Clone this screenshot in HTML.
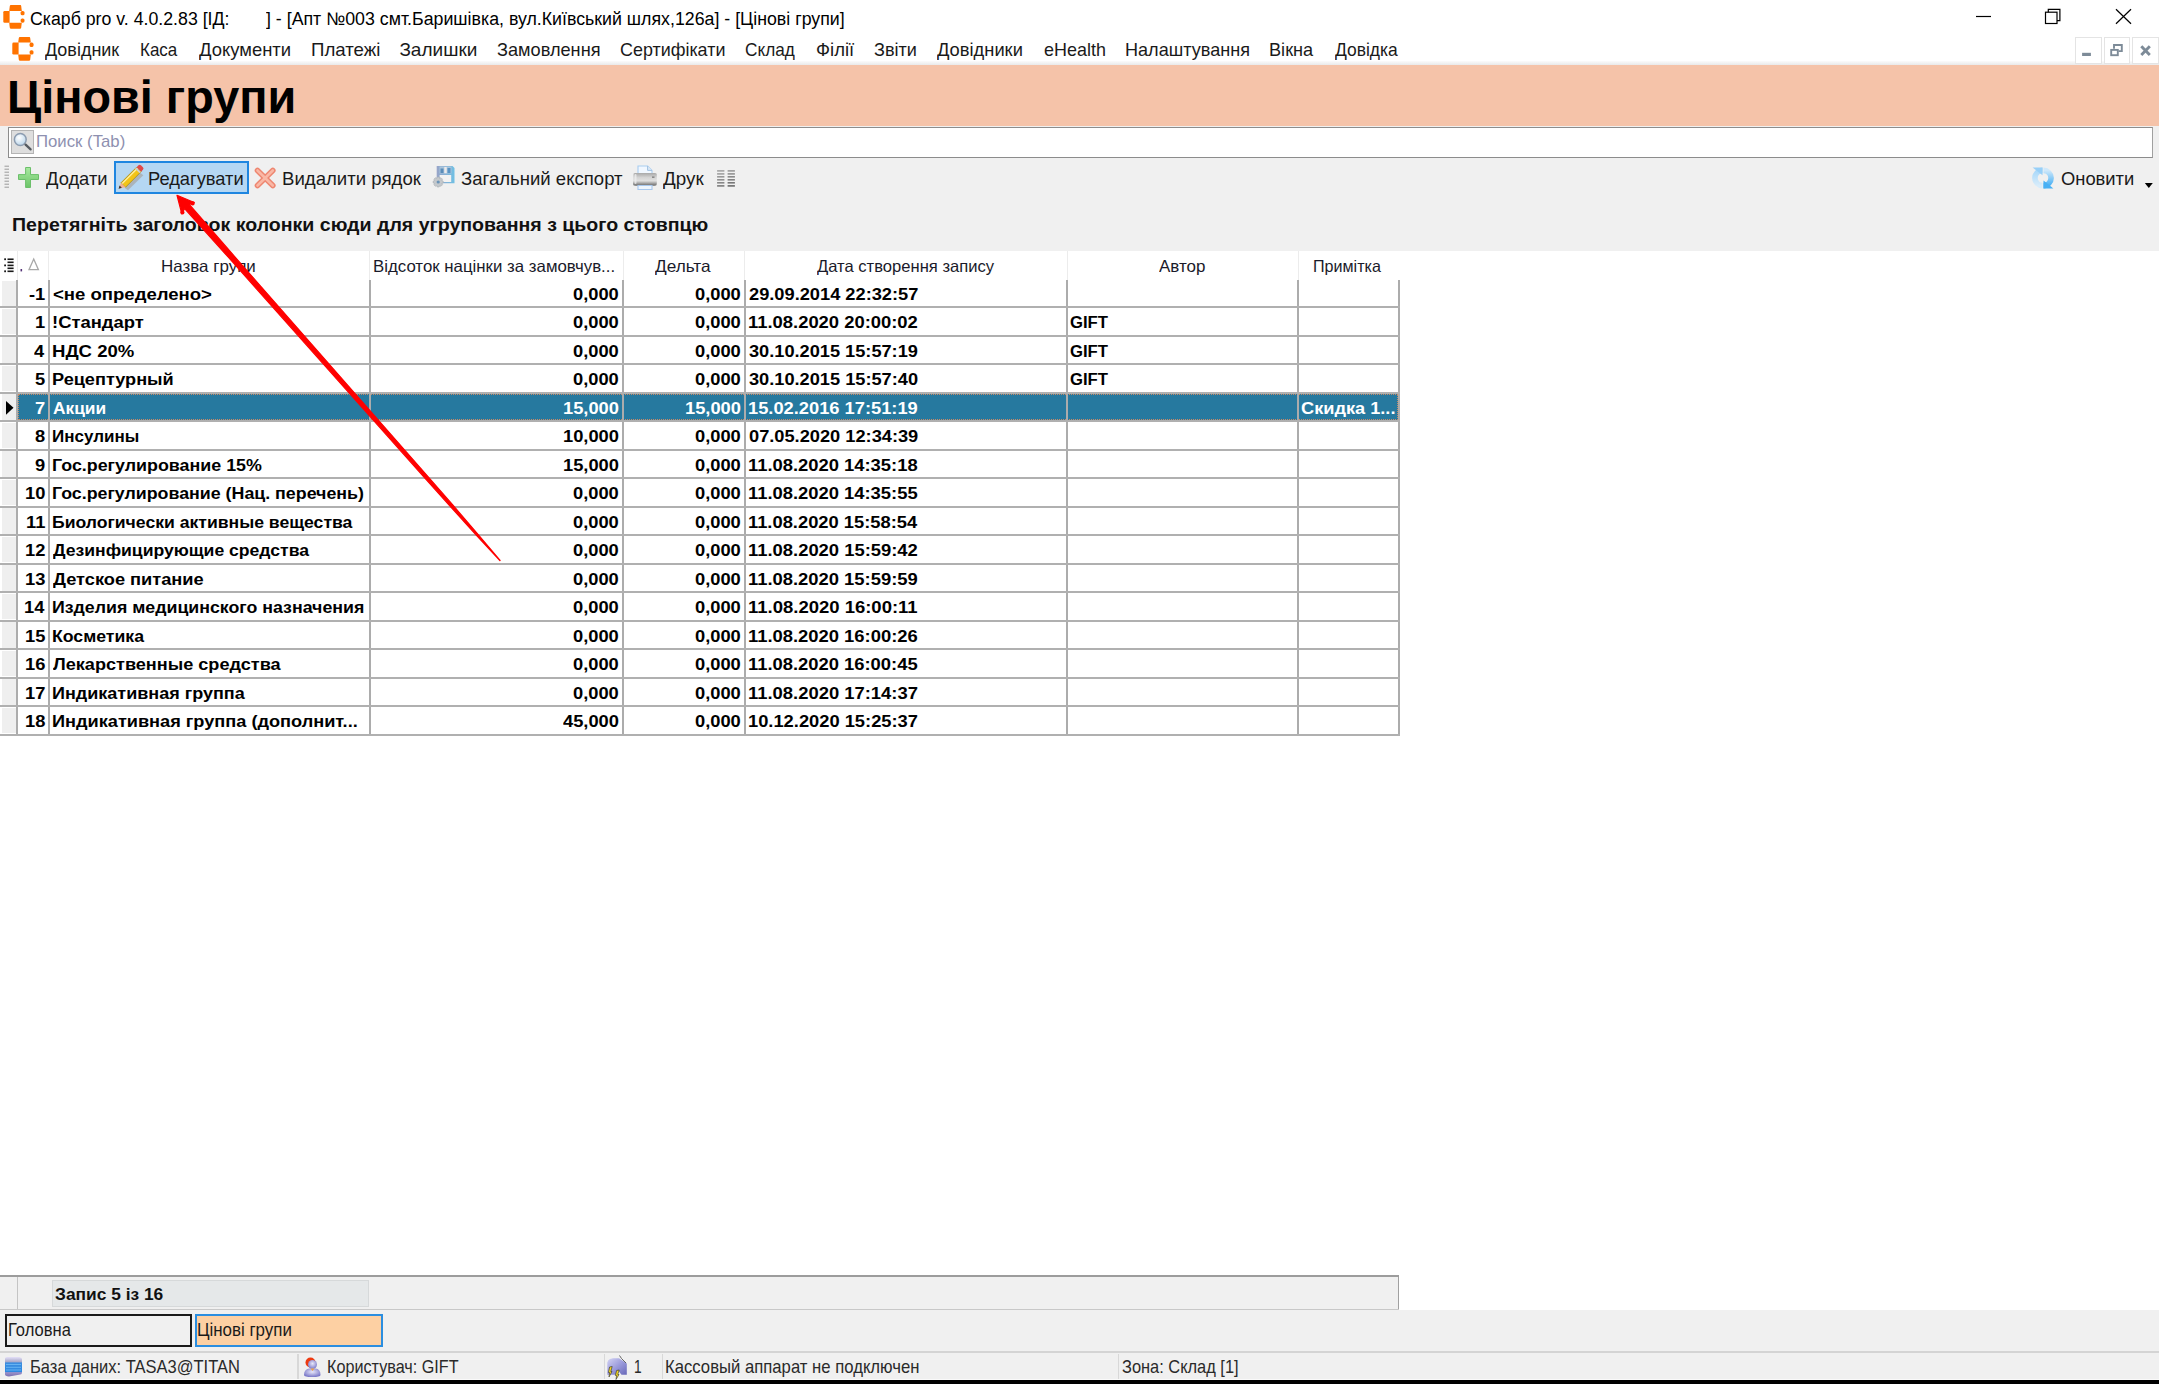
<!DOCTYPE html>
<html><head><meta charset="utf-8">
<style>
html,body{margin:0;padding:0;width:2159px;height:1384px;overflow:hidden;background:#fff;font-family:"Liberation Sans",sans-serif;}
body{position:relative;}
.t{position:absolute;white-space:pre;transform-origin:0 0;}
.b{position:absolute;}
svg{position:absolute;overflow:visible;}
</style></head><body>
<!-- menu bottom gradient -->
<div class="b" style="left:0;top:61px;width:2159px;height:4px;background:linear-gradient(#fbfbfb,#e9e9e9);"></div>
<!-- peach header -->
<div class="b" style="left:0;top:65px;width:2159px;height:61px;background:#f5c3a9;"></div>
<!-- gray panels -->
<div class="b" style="left:0;top:126px;width:2159px;height:124.5px;background:#f0f0f0;"></div>
<!-- search box -->
<div class="b" style="left:7.5px;top:126.5px;width:2143.5px;height:29px;background:#fff;border:1.5px solid #8c8c8c;border-right-color:#a0a0a0;"></div>
<div class="b" style="left:11px;top:130px;width:21px;height:22px;background:#dedede;border:1.5px solid #b4b4b4;"></div>
<svg style="left:11px;top:130px" width="24" height="24" viewBox="0 0 24 24">
  <defs><radialGradient id="lens" cx="0.4" cy="0.35" r="0.7"><stop offset="0" stop-color="#ffffff"/><stop offset="1" stop-color="#b8d4ea"/></radialGradient></defs>
  <circle cx="9.3" cy="9.5" r="5.9" fill="url(#lens)" stroke="#8c9cb0" stroke-width="1.5"/>
  <line x1="14.6" y1="14.6" x2="19.6" y2="19.4" stroke="#555a60" stroke-width="2.3" stroke-linecap="round"/>
</svg>

<!-- title bar logo -->
<svg style="left:0;top:0" width="40" height="34" viewBox="0 0 40 34">
  <g fill="#ff7300">
    <path d="M10 5 H20.5 Q21 5 21.2 6 L21.8 11 H9.2 L9.8 6 Q10 5 10.8 5 Z"/>
    <path d="M4.5 11 H9.6 V22.8 H4.5 Q3.3 22.8 3.3 21.5 V12.3 Q3.3 11 4.5 11 Z"/>
    <path d="M9.2 22.8 H21.8 L21.2 27.8 Q21 28.8 20 28.8 H11 Q10 28.8 9.8 27.8 Z"/>
    <rect x="20.6" y="11" width="3.9" height="4.3" rx="1.6"/>
    <rect x="20.6" y="18.4" width="3.9" height="4.3" rx="1.6"/>
  </g>
</svg>
<!-- menu logo -->
<svg style="left:8.7px;top:31.6px" width="40" height="34" viewBox="0 0 40 34">
  <g fill="#ff7300">
    <path d="M10 5 H20.5 Q21 5 21.2 6 L21.8 10.6 H9.2 L9.8 6 Q10 5 10.8 5 Z"/>
    <path d="M4.5 10.6 H9.6 V22.6 H4.5 Q3.3 22.6 3.3 21.3 V11.9 Q3.3 10.6 4.5 10.6 Z"/>
    <path d="M9.2 22.6 H21.8 L21.2 27.8 Q21 28.8 20 28.8 H11 Q10 28.8 9.8 27.8 Z"/>
    <rect x="20.6" y="10.6" width="3.9" height="4.4" rx="1.6"/>
    <rect x="20.6" y="18.2" width="3.9" height="4.4" rx="1.6"/>
  </g>
</svg>
<!-- window buttons -->
<svg style="left:1960px;top:0" width="199" height="34" viewBox="0 0 199 34">
  <line x1="16" y1="16.5" x2="31" y2="16.5" stroke="#000" stroke-width="1.2"/>
  <rect x="85.5" y="12.2" width="11.5" height="11.3" fill="none" stroke="#000" stroke-width="1.2"/>
  <path d="M88.3 12.2 V9.3 H99.9 V20.7 H97" fill="none" stroke="#000" stroke-width="1.2"/>
  <line x1="156" y1="9.2" x2="171" y2="23.8" stroke="#000" stroke-width="1.2"/>
  <line x1="171" y1="9.2" x2="156" y2="23.8" stroke="#000" stroke-width="1.2"/>
</svg>
<!-- mdi buttons -->
<div class="b" style="left:2075px;top:37px;width:24.5px;height:24.5px;border:1px solid #e4e4e4;background:#fff;"></div>
<div class="b" style="left:2103.5px;top:37px;width:24.5px;height:24.5px;border:1px solid #e4e4e4;background:#fff;"></div>
<div class="b" style="left:2132px;top:37px;width:24.5px;height:24.5px;border:1px solid #e4e4e4;background:#fff;"></div>
<svg style="left:2075px;top:37px" width="84" height="26" viewBox="0 0 84 26">
  <rect x="7.1" y="15.8" width="8.8" height="3.2" fill="#7d8b98"/>
  <g fill="none" stroke="#7d8b98" stroke-width="1.9">
    <rect x="36.2" y="12.9" width="6.6" height="5.3"/>
    <path d="M39 11.8 V8 H46.8 V14.1 H43.5"/>
  </g>
  <path d="M66.3 9.2 L74.8 17.9 M74.8 9.2 L66.3 17.9" stroke="#7d8b98" stroke-width="2.9"/>
</svg>

<!-- toolbar gripper -->
<svg style="left:4px;top:165px" width="6" height="24" viewBox="0 0 6 24">
  <g stroke="#9a9a9a" stroke-width="1" stroke-dasharray="0">
    <line x1="0.5" y1="1.2" x2="5" y2="1.2"/><line x1="0.5" y1="4.2" x2="5" y2="4.2"/>
    <line x1="0.5" y1="7.2" x2="5" y2="7.2"/><line x1="0.5" y1="10.2" x2="5" y2="10.2"/>
    <line x1="0.5" y1="13.2" x2="5" y2="13.2"/><line x1="0.5" y1="16.2" x2="5" y2="16.2"/>
    <line x1="0.5" y1="19.2" x2="5" y2="19.2"/><line x1="0.5" y1="22.2" x2="5" y2="22.2"/>
  </g>
</svg>
<!-- plus icon -->
<svg style="left:17px;top:166px" width="24" height="24" viewBox="0 0 24 24">
  <defs><linearGradient id="gp" x1="0" y1="0" x2="0" y2="1"><stop offset="0" stop-color="#a8eaa0"/><stop offset="1" stop-color="#6cc468"/></linearGradient></defs>
  <path d="M8.6 1.5 H13.5 V8.6 H21.5 V13.5 H13.5 V21.5 H8.6 V13.5 H1.5 V8.6 H8.6 Z" fill="url(#gp)" stroke="#6cbf6a" stroke-width="1"/>
</svg>
<!-- edit button -->
<div class="b" style="left:113.8px;top:161px;width:131.5px;height:28.8px;background:#b5d7f3;border:2px solid #1f86e0;"></div>
<svg style="left:115px;top:162px" width="32" height="32" viewBox="0 0 32 32"><g transform="translate(2.2 -0.6) scale(0.9)">
  <path d="M8.5 29.5 L25.5 12.5 L29 15.5 L12 32 Z" fill="#a8a8a8" opacity="0.75"/>
  <path d="M4.2 23.8 L21.6 6.4 L26.6 11.4 L9.2 28.8 Z" fill="#f2c418" stroke="#a88a10" stroke-width="0.9"/>
  <path d="M5.6 24.6 L22.6 7.6" stroke="#fff0a0" stroke-width="1.4"/>
  <path d="M21.6 6.4 L23.6 4.4 Q25 3 26.4 4.4 L28.6 6.6 Q30 8 28.6 9.4 L26.6 11.4 Z" fill="#e04848"/>
  <path d="M20.6 7.4 L25.6 12.4" stroke="#d0d0d0" stroke-width="2"/>
  <path d="M4.2 23.8 L9.2 28.8 L1.6 30.4 Z" fill="#f2b090"/>
  <path d="M1.6 30.4 L2.6 26.8 L5.2 29.4 Z" fill="#333"/>
</g></svg>
<!-- delete X icon -->
<svg style="left:254px;top:166.5px" width="23" height="22" viewBox="0 0 23 22">
  <path d="M3.5 3.5 L18.8 18.5 M18.8 3.5 L3.5 18.5" stroke="#ee8670" stroke-width="5.6" stroke-linecap="round"/>
  <path d="M3.5 3.5 L18.8 18.5 M18.8 3.5 L3.5 18.5" stroke="#f9b8a6" stroke-width="2.6" stroke-linecap="round"/>
</svg>
<!-- export floppy icon -->
<svg style="left:428px;top:162px" width="32" height="30" viewBox="0 0 32 30">
  <defs>
    <linearGradient id="fb" x1="0" y1="0" x2="1" y2="0"><stop offset="0" stop-color="#98a4c8"/><stop offset="1" stop-color="#70c0e4"/></linearGradient>
  </defs>
  <path d="M8.7 3.9 H24.5 L26.5 5.9 V21.3 H8.7 Z" fill="url(#fb)"/>
  <rect x="11.5" y="4.5" width="12" height="7" fill="#a8c4dc"/>
  <rect x="12.5" y="6.5" width="3" height="4.5" fill="#5a8cb8"/>
  <rect x="19.5" y="6" width="3" height="5" fill="#5a94c4"/>
  <rect x="16.3" y="5" width="2.4" height="6.2" fill="#eceaea"/>
  <rect x="11.6" y="13" width="11.6" height="7" fill="#f2f2f2"/>
  <g transform="translate(10.2 20)">
    <path d="M-1 -5 H1 L1.4 -3.6 L2.8 -4.3 L4.3 -2.8 L3.6 -1.4 L5 -1 V1 L3.6 1.4 L4.3 2.8 L2.8 4.3 L1.4 3.6 L1 5 H-1 L-1.4 3.6 L-2.8 4.3 L-4.3 2.8 L-3.6 1.4 L-5 1 V-1 L-3.6 -1.4 L-4.3 -2.8 L-2.8 -4.3 L-1.4 -3.6 Z" fill="#c4c8cc" stroke="#a8aeb4" stroke-width="0.6"/>
    <circle r="1.6" fill="#6a94b8"/>
  </g>
</svg>
<!-- printer icon -->
<svg style="left:628px;top:162px" width="32" height="30" viewBox="0 0 32 30">
  <defs>
    <linearGradient id="pb" x1="0" y1="0" x2="0" y2="1"><stop offset="0" stop-color="#a8a8a8"/><stop offset="0.35" stop-color="#d4d4d4"/><stop offset="0.6" stop-color="#e0e0e0"/><stop offset="0.9" stop-color="#808080"/><stop offset="1" stop-color="#9a9a9a"/></linearGradient>
  </defs>
  <path d="M10 4 H19.6 L24 8.4 V12 H10 Z" fill="#f0f7ff" stroke="#a8cdf0" stroke-width="1.1"/>
  <path d="M19.6 4 V8.4 H24" fill="#dbe8f6" stroke="#a0c0e0" stroke-width="1"/>
  <path d="M5.5 12.5 Q5 11 7 11 H27 Q29 11 28.8 12.5 V22 Q28.8 24 26.5 24 H7.5 Q5 24 5 22 Z" fill="url(#pb)"/>
  <rect x="6.5" y="12" width="2" height="10" rx="1" fill="#eeeeee" opacity="0.8"/>
  <rect x="24" y="14.5" width="2.5" height="1.3" fill="#7a7a7a"/>
  <path d="M10 23.5 H24 V27.5 H10 Z" fill="#eef5fd" stroke="#a8c8ee" stroke-width="1.1"/>
</svg>
<!-- column chooser icon -->
<svg style="left:716px;top:169px" width="20" height="19" viewBox="0 0 20 19"><rect x="1.1" y="1.1" width="7.3" height="1.6" fill="#a4a4a4"/><rect x="11.6" y="1.1" width="7.3" height="1.6" fill="#9a9a9a"/><rect x="1.1" y="4.1" width="7.3" height="1.6" fill="#a0a0a0"/><rect x="11.6" y="4.1" width="7.3" height="1.6" fill="#929292"/><rect x="1.1" y="7.0" width="7.3" height="1.6" fill="#989898"/><rect x="11.6" y="7.0" width="7.3" height="1.6" fill="#8a8a8a"/><rect x="1.1" y="10.0" width="7.3" height="1.6" fill="#909090"/><rect x="11.6" y="10.0" width="7.3" height="1.6" fill="#828282"/><rect x="1.1" y="13.0" width="7.3" height="1.6" fill="#888888"/><rect x="11.6" y="13.0" width="7.3" height="1.6" fill="#787878"/><rect x="1.1" y="16.1" width="7.3" height="1.6" fill="#7c7c7c"/><rect x="11.6" y="16.1" width="7.3" height="1.6" fill="#6c6c6c"/></svg>
<!-- refresh icon -->
<svg style="left:2031px;top:166px" width="25" height="24" viewBox="0 0 25 24">
  <defs>
    <linearGradient id="rfl" x1="0" y1="0" x2="0" y2="1"><stop offset="0" stop-color="#a8d8fa"/><stop offset="1" stop-color="#d8ecfa"/></linearGradient>
    <linearGradient id="rfr" x1="0" y1="0" x2="0" y2="1"><stop offset="0" stop-color="#cfe8fa"/><stop offset="1" stop-color="#48b0f4"/></linearGradient>
  </defs>
  <path d="M11.5 19.6 A7.6 7.6 0 0 1 11.5 4.4" fill="none" stroke="url(#rfl)" stroke-width="5.6"/>
  <path d="M1.6 1.4 H11.5 V9.2 Z" fill="#98d0f8"/>
  <path d="M11.5 4.4 A7.6 7.6 0 0 1 11.5 19.6" fill="none" stroke="url(#rfr)" stroke-width="5.6" transform="translate(1 0)"/>
  <path d="M22.4 22.4 H12.5 V14.6 Z" fill="#48b0f4"/>
</svg>
<!-- dropdown arrow -->
<svg style="left:2144px;top:182px" width="10" height="7" viewBox="0 0 10 7">
  <path d="M0.8 1 H8.8 L4.8 6 Z" fill="#000"/>
</svg>

<!-- ===== GRID ===== -->
<!-- row indicator column bg -->
<div class="b" style="left:1.7px;top:280.90px;width:14px;height:25.00px;background:#efefef;"></div>
<div class="b" style="left:1.7px;top:308.80px;width:14px;height:25.60px;background:#efefef;"></div>
<div class="b" style="left:1.7px;top:337.30px;width:14px;height:25.60px;background:#efefef;"></div>
<div class="b" style="left:1.7px;top:365.80px;width:14px;height:25.60px;background:#efefef;"></div>
<div class="b" style="left:1.7px;top:394.30px;width:14px;height:25.60px;background:#efefef;"></div>
<div class="b" style="left:1.7px;top:422.80px;width:14px;height:25.60px;background:#efefef;"></div>
<div class="b" style="left:1.7px;top:451.30px;width:14px;height:25.60px;background:#efefef;"></div>
<div class="b" style="left:1.7px;top:479.80px;width:14px;height:25.60px;background:#efefef;"></div>
<div class="b" style="left:1.7px;top:508.30px;width:14px;height:25.60px;background:#efefef;"></div>
<div class="b" style="left:1.7px;top:536.80px;width:14px;height:25.60px;background:#efefef;"></div>
<div class="b" style="left:1.7px;top:565.30px;width:14px;height:25.60px;background:#efefef;"></div>
<div class="b" style="left:1.7px;top:593.80px;width:14px;height:25.60px;background:#efefef;"></div>
<div class="b" style="left:1.7px;top:622.30px;width:14px;height:25.60px;background:#efefef;"></div>
<div class="b" style="left:1.7px;top:650.80px;width:14px;height:25.60px;background:#efefef;"></div>
<div class="b" style="left:1.7px;top:679.30px;width:14px;height:25.60px;background:#efefef;"></div>
<div class="b" style="left:1.7px;top:707.80px;width:14px;height:25.60px;background:#efefef;"></div>
<!-- selected row -->
<div class="b" style="left:17.5px;top:393.3px;width:1380.5px;height:27.5px;background:#26799f;"></div>
<div class="b" style="left:17.8px;top:394.4px;width:1378px;height:23.2px;border:1.4px dotted #c98a66;"></div>
<!-- header separators -->
<div class="b" style="left:16.7px;top:250.5px;width:1px;height:29.5px;background:#ececec;"></div>
<div class="b" style="left:48.2px;top:250.5px;width:1px;height:29.5px;background:#ececec;"></div>
<div class="b" style="left:369.3px;top:250.5px;width:1px;height:29.5px;background:#ececec;"></div>
<div class="b" style="left:622.6px;top:250.5px;width:1px;height:29.5px;background:#ececec;"></div>
<div class="b" style="left:744.3px;top:250.5px;width:1px;height:29.5px;background:#ececec;"></div>
<div class="b" style="left:1066.7px;top:250.5px;width:1px;height:29.5px;background:#ececec;"></div>
<div class="b" style="left:1297.6px;top:250.5px;width:1px;height:29.5px;background:#ececec;"></div>
<!-- header icons -->
<svg style="left:3px;top:257px" width="40" height="17" viewBox="0 0 40 17">
  <g fill="#1a1a1a">
    <rect x="1.2" y="1.35" width="1.8" height="1.8"/><rect x="1.2" y="7.5" width="1.8" height="1.8"/><rect x="1.2" y="13.4" width="1.8" height="1.8"/>
    <rect x="4.5" y="1.45" width="6.1" height="1.6"/><rect x="4.5" y="4.5" width="6.1" height="1.6"/><rect x="4.5" y="7.6" width="6.1" height="1.6"/>
    <rect x="4.5" y="10.5" width="6.1" height="1.6"/><rect x="4.5" y="13.5" width="6.1" height="1.6"/>
    <rect x="17.5" y="12" width="1.6" height="2.4" fill="#553377"/>
  </g>
  <path d="M30.7 2 L35.4 12.7 H26 Z" fill="none" stroke="#a8a8a8" stroke-width="1.3"/>
</svg>
<!-- grid lines: verticals in body -->
<div id="gridlines">
<div class="b" style="left:16.30px;top:279.5px;width:1.8px;height:456px;background:#acacac;"></div>
<div class="b" style="left:47.80px;top:279.5px;width:1.8px;height:456px;background:#acacac;"></div>
<div class="b" style="left:368.90px;top:279.5px;width:1.8px;height:456px;background:#acacac;"></div>
<div class="b" style="left:622.20px;top:279.5px;width:1.8px;height:456px;background:#acacac;"></div>
<div class="b" style="left:743.90px;top:279.5px;width:1.8px;height:456px;background:#acacac;"></div>
<div class="b" style="left:1066.30px;top:279.5px;width:1.8px;height:456px;background:#acacac;"></div>
<div class="b" style="left:1297.20px;top:279.5px;width:1.8px;height:456px;background:#acacac;"></div>
<div class="b" style="left:1397.80px;top:279.5px;width:1.8px;height:456px;background:#acacac;"></div>
<div class="b" style="left:0;top:306.25px;width:1399.6px;height:1.9px;background:#b0b0b0;"></div>
<div class="b" style="left:0;top:334.75px;width:1399.6px;height:1.9px;background:#b0b0b0;"></div>
<div class="b" style="left:0;top:363.25px;width:1399.6px;height:1.9px;background:#b0b0b0;"></div>
<div class="b" style="left:0;top:391.75px;width:1399.6px;height:1.9px;background:#b0b0b0;"></div>
<div class="b" style="left:0;top:420.25px;width:1399.6px;height:1.9px;background:#b0b0b0;"></div>
<div class="b" style="left:0;top:448.75px;width:1399.6px;height:1.9px;background:#b0b0b0;"></div>
<div class="b" style="left:0;top:477.25px;width:1399.6px;height:1.9px;background:#b0b0b0;"></div>
<div class="b" style="left:0;top:505.75px;width:1399.6px;height:1.9px;background:#b0b0b0;"></div>
<div class="b" style="left:0;top:534.25px;width:1399.6px;height:1.9px;background:#b0b0b0;"></div>
<div class="b" style="left:0;top:562.75px;width:1399.6px;height:1.9px;background:#b0b0b0;"></div>
<div class="b" style="left:0;top:591.25px;width:1399.6px;height:1.9px;background:#b0b0b0;"></div>
<div class="b" style="left:0;top:619.75px;width:1399.6px;height:1.9px;background:#b0b0b0;"></div>
<div class="b" style="left:0;top:648.25px;width:1399.6px;height:1.9px;background:#b0b0b0;"></div>
<div class="b" style="left:0;top:676.75px;width:1399.6px;height:1.9px;background:#b0b0b0;"></div>
<div class="b" style="left:0;top:705.25px;width:1399.6px;height:1.9px;background:#b0b0b0;"></div>
<div class="b" style="left:0;top:733.75px;width:1399.6px;height:1.9px;background:#b0b0b0;"></div>
</div>
<!-- row indicator triangle -->
<svg style="left:5px;top:400px" width="10" height="16" viewBox="0 0 10 16">
  <path d="M1 1 L8.5 7.8 L1 14.8 Z" fill="#000"/>
</svg>

<!-- ===== FOOTER ===== -->
<div class="b" style="left:0;top:1274.5px;width:1398.5px;height:35px;background:#f0f0f0;border-right:1px solid #a0a0a0;box-sizing:border-box;"></div>
<div class="b" style="left:0;top:1274.5px;width:1399px;height:2.5px;background:#9c9c9c;"></div>
<div class="b" style="left:0;top:1308.7px;width:1399px;height:1px;background:#c8c8c8;"></div>
<div class="b" style="left:16.5px;top:1277px;width:1px;height:31.7px;background:#c4c4c4;"></div>
<div class="b" style="left:51.5px;top:1279.5px;width:317px;height:27px;background:#e5e8e9;border:1px solid #d6d9da;box-sizing:border-box;"></div>
<!-- tabs bar -->
<div class="b" style="left:0;top:1309.7px;width:2159px;height:42px;background:#f0f0f0;"></div>
<div class="b" style="left:4.6px;top:1313.7px;width:187.2px;height:33.7px;border:2px solid #1a1a1a;box-sizing:border-box;background:#f0f0f0;"></div>
<div class="b" style="left:194.9px;top:1313.7px;width:187.7px;height:33.7px;border:2px solid #2b8ee0;box-sizing:border-box;background:#fdd0a3;"></div>
<!-- status bar -->
<div class="b" style="left:0;top:1351px;width:2159px;height:1.5px;background:#d4d4d4;"></div>
<div class="b" style="left:0;top:1352.5px;width:2159px;height:26.5px;background:#f0f0f0;"></div>
<div class="b" style="left:0;top:1379px;width:2159px;height:1px;background:#fafafa;"></div>
<div class="b" style="left:0;top:1379.9px;width:2159px;height:4.1px;background:#000;"></div>
<div class="b" style="left:297px;top:1354px;width:1.5px;height:25px;background:#d8d8d8;"></div>
<div class="b" style="left:603.5px;top:1354px;width:1.5px;height:25px;background:#d8d8d8;"></div>
<div class="b" style="left:661.5px;top:1354px;width:1.5px;height:25px;background:#d8d8d8;"></div>
<div class="b" style="left:1117.5px;top:1354px;width:1.5px;height:25px;background:#d8d8d8;"></div>
<!-- DB icon -->
<svg style="left:4px;top:1356px" width="20" height="22" viewBox="0 0 20 22">
  <defs><linearGradient id="db" x1="0" y1="0" x2="0" y2="1"><stop offset="0" stop-color="#e4e0f8"/><stop offset="0.25" stop-color="#a8a8c8"/><stop offset="0.3" stop-color="#3c8ee0"/><stop offset="0.75" stop-color="#2e88e0"/><stop offset="0.8" stop-color="#9a90c8"/><stop offset="1" stop-color="#7a70b0"/></linearGradient></defs>
  <path d="M1 2.5 Q1 1 3 1 H15 Q18 1.5 18 3 V17 Q18 18.5 15 18.8 L5 20.5 Q1 20 1 18.5 Z" fill="url(#db)"/>
  <g stroke="#6ab8f4" stroke-width="0.9"><line x1="2" y1="8.5" x2="17" y2="8.5"/><line x1="2" y1="11.3" x2="17" y2="11.3"/><line x1="2" y1="14" x2="17" y2="14"/></g>
</svg>
<!-- user icon -->
<svg style="left:303px;top:1356px" width="18" height="22" viewBox="0 0 18 22">
  <defs><radialGradient id="us" cx="0.5" cy="0.4" r="0.6"><stop offset="0" stop-color="#e8e8fa"/><stop offset="1" stop-color="#7a78c8"/></radialGradient></defs>
  <circle cx="7.5" cy="6.5" r="5" fill="#ee3a10"/>
  <circle cx="9.5" cy="8.5" r="4.5" fill="url(#us)"/>
  <path d="M1 19 Q1 13 6.5 12.5 H12.5 Q17.5 13 17.5 19 Q17.5 21 9 21 Q1 21 1 19 Z" fill="url(#us)"/>
  <path d="M7.5 12.5 L9.5 15 L11.5 12.5 Z" fill="#f0a040"/>
</svg>
<!-- cash register icon -->
<svg style="left:606px;top:1354px" width="24" height="26" viewBox="0 0 24 26">
  <defs><linearGradient id="cr" x1="0" y1="0" x2="1" y2="1"><stop offset="0" stop-color="#d4d4f4"/><stop offset="0.5" stop-color="#9c9cdc"/><stop offset="1" stop-color="#6868b8"/></linearGradient></defs>
  <path d="M1.3 8.5 Q2 5.5 4 5 L7 4.2 H13 L20.8 9.5 V20.8 H15.5 L12.5 17 L10 20.8 H1.3 Z" fill="url(#cr)"/>
  <path d="M3.6 13 L6.2 12.5 L4.8 17.5 L6 17.5 L3 23 L3.6 18.5 L2.4 18.5 Z" fill="#f4d820" stroke="#2a2a2a" stroke-width="0.6"/>
  <path d="M10.6 16.5 L13.2 16 L11.8 20.5 L13 20.5 L10 25.5 L10.6 21.5 L9.4 21.5 Z" fill="#f4d820" stroke="#2a2a2a" stroke-width="0.6"/>
  <path d="M13.5 1.5 L15.5 4.5 L20 9" stroke="#444" stroke-width="0.8" fill="none"/>
</svg>

<div class="t" style="left:30.11px;top:9.76px;font-size:18px;line-height:18px;font-weight:normal;color:#000;transform:scaleX(0.9848);">Скарб pro v. 4.0.2.83 [ІД:</div>
<div class="t" style="left:265.70px;top:9.76px;font-size:18px;line-height:18px;font-weight:normal;color:#000;transform:scaleX(0.9868);">] - [Апт №003 смт.Баришівка, вул.Київський шлях,126а] - [Цінові групи]</div>
<div class="t" style="left:44.91px;top:39.52px;font-size:19px;line-height:19px;font-weight:normal;color:#1a1a1a;transform:scaleX(0.9458);">Довідник</div>
<div class="t" style="left:140.36px;top:39.52px;font-size:19px;line-height:19px;font-weight:normal;color:#1a1a1a;transform:scaleX(0.8947);">Каса</div>
<div class="t" style="left:199.20px;top:39.52px;font-size:19px;line-height:19px;font-weight:normal;color:#1a1a1a;transform:scaleX(0.9702);">Документи</div>
<div class="t" style="left:310.83px;top:39.52px;font-size:19px;line-height:19px;font-weight:normal;color:#1a1a1a;transform:scaleX(0.9817);">Платежі</div>
<div class="t" style="left:399.40px;top:39.52px;font-size:19px;line-height:19px;font-weight:normal;color:#1a1a1a;transform:scaleX(1.0000);">Залишки</div>
<div class="t" style="left:496.73px;top:39.52px;font-size:19px;line-height:19px;font-weight:normal;color:#1a1a1a;transform:scaleX(0.9561);">Замовлення</div>
<div class="t" style="left:619.85px;top:39.52px;font-size:19px;line-height:19px;font-weight:normal;color:#1a1a1a;transform:scaleX(0.9426);">Сертифікати</div>
<div class="t" style="left:745.49px;top:39.52px;font-size:19px;line-height:19px;font-weight:normal;color:#1a1a1a;transform:scaleX(0.9052);">Склад</div>
<div class="t" style="left:815.53px;top:39.52px;font-size:19px;line-height:19px;font-weight:normal;color:#1a1a1a;transform:scaleX(0.9718);">Філії</div>
<div class="t" style="left:874.23px;top:39.52px;font-size:19px;line-height:19px;font-weight:normal;color:#1a1a1a;transform:scaleX(0.9515);">Звіти</div>
<div class="t" style="left:937.40px;top:39.52px;font-size:19px;line-height:19px;font-weight:normal;color:#1a1a1a;transform:scaleX(0.9639);">Довідники</div>
<div class="t" style="left:1043.64px;top:39.52px;font-size:19px;line-height:19px;font-weight:normal;color:#1a1a1a;transform:scaleX(0.9446);">eHealth</div>
<div class="t" style="left:1125.27px;top:39.52px;font-size:19px;line-height:19px;font-weight:normal;color:#1a1a1a;transform:scaleX(0.9515);">Налаштування</div>
<div class="t" style="left:1269.17px;top:39.52px;font-size:19px;line-height:19px;font-weight:normal;color:#1a1a1a;transform:scaleX(0.9554);">Вікна</div>
<div class="t" style="left:1334.61px;top:39.52px;font-size:19px;line-height:19px;font-weight:normal;color:#1a1a1a;transform:scaleX(0.9183);">Довідка</div>
<div class="t" style="left:6.68px;top:73.66px;font-size:46px;line-height:46px;font-weight:bold;color:#000;transform:scaleX(1.0169);">Цінові групи</div>
<div class="t" style="left:36.12px;top:132.91px;font-size:17px;line-height:17px;font-weight:normal;color:#8e90b0;transform:scaleX(0.9853);">Поиск (Tab)</div>
<div class="t" style="left:46.30px;top:168.62px;font-size:19px;line-height:19px;font-weight:normal;color:#1a1a1a;transform:scaleX(0.9652);">Додати</div>
<div class="t" style="left:147.56px;top:168.62px;font-size:19px;line-height:19px;font-weight:normal;color:#1a1a1a;transform:scaleX(0.9627);">Редагувати</div>
<div class="t" style="left:281.93px;top:168.62px;font-size:19px;line-height:19px;font-weight:normal;color:#1a1a1a;transform:scaleX(0.9792);">Видалити рядок</div>
<div class="t" style="left:460.71px;top:168.62px;font-size:19px;line-height:19px;font-weight:normal;color:#1a1a1a;transform:scaleX(0.9769);">Загальний експорт</div>
<div class="t" style="left:662.80px;top:168.62px;font-size:19px;line-height:19px;font-weight:normal;color:#1a1a1a;transform:scaleX(0.9898);">Друк</div>
<div class="t" style="left:2061.03px;top:168.62px;font-size:19px;line-height:19px;font-weight:normal;color:#1a1a1a;transform:scaleX(0.9654);">Оновити</div>
<div class="t" style="left:11.50px;top:215.86px;font-size:18px;line-height:18px;font-weight:bold;color:#111;transform:scaleX(1.0865);">Перетягніть заголовок колонки сюди для угруповання з цього стовпцю</div>
<div class="t" style="left:161.36px;top:258.23px;font-size:16.5px;line-height:16.5px;font-weight:normal;color:#1a1a2a;transform:scaleX(1.0278);">Назва групи</div>
<div class="t" style="left:373.07px;top:258.23px;font-size:16.5px;line-height:16.5px;font-weight:normal;color:#1a1a2a;transform:scaleX(1.0199);">Відсоток націнки за замовчув...</div>
<div class="t" style="left:655.40px;top:258.23px;font-size:16.5px;line-height:16.5px;font-weight:normal;color:#1a1a2a;transform:scaleX(1.0430);">Дельта</div>
<div class="t" style="left:817.20px;top:258.23px;font-size:16.5px;line-height:16.5px;font-weight:normal;color:#1a1a2a;transform:scaleX(1.0050);">Дата створення запису</div>
<div class="t" style="left:1159.30px;top:258.23px;font-size:16.5px;line-height:16.5px;font-weight:normal;color:#1a1a2a;transform:scaleX(1.0280);">Автор</div>
<div class="t" style="left:1313.03px;top:258.23px;font-size:16.5px;line-height:16.5px;font-weight:normal;color:#1a1a2a;transform:scaleX(0.9766);">Примітка</div>
<div class="t" style="left:55.29px;top:1286.21px;font-size:17px;line-height:17px;font-weight:bold;color:#111;transform:scaleX(1.0216);">Запис 5 із 16</div>
<div class="t" style="left:7.98px;top:1322.19px;font-size:17.5px;line-height:17.5px;font-weight:normal;color:#1a1a1a;transform:scaleX(0.9454);">Головна</div>
<div class="t" style="left:197.25px;top:1322.19px;font-size:17.5px;line-height:17.5px;font-weight:normal;color:#1a1a1a;transform:scaleX(0.9663);">Цінові групи</div>
<div class="t" style="left:29.90px;top:1357.22px;font-size:19px;line-height:19px;font-weight:normal;color:#2a2a2a;transform:scaleX(0.8684);">База даних: TASA3@TITAN</div>
<div class="t" style="left:327.02px;top:1357.22px;font-size:19px;line-height:19px;font-weight:normal;color:#2a2a2a;transform:scaleX(0.8520);">Користувач: GIFT</div>
<div class="t" style="left:633.99px;top:1357.22px;font-size:19px;line-height:19px;font-weight:normal;color:#2a2a2a;transform:scaleX(0.7229);">1</div>
<div class="t" style="left:664.68px;top:1357.22px;font-size:19px;line-height:19px;font-weight:normal;color:#2a2a2a;transform:scaleX(0.8782);">Кассовый аппарат не подключен</div>
<div class="t" style="left:1122.48px;top:1357.22px;font-size:19px;line-height:19px;font-weight:normal;color:#2a2a2a;transform:scaleX(0.8635);">Зона: Склад [1]</div>
<div class="t" style="left:28.59px;top:286.56px;font-size:16px;line-height:16px;font-weight:bold;color:#000;transform:scaleX(1.1431);">-1</div>
<div class="t" style="left:52.60px;top:286.56px;font-size:16px;line-height:16px;font-weight:bold;color:#000;transform:scaleX(1.1589);">&lt;не определено&gt;</div>
<div class="t" style="left:573.31px;top:286.56px;font-size:16px;line-height:16px;font-weight:bold;color:#000;transform:scaleX(1.1431);">0,000</div>
<div class="t" style="left:694.71px;top:286.56px;font-size:16px;line-height:16px;font-weight:bold;color:#000;transform:scaleX(1.1431);">0,000</div>
<div class="t" style="left:748.73px;top:286.56px;font-size:16px;line-height:16px;font-weight:bold;color:#000;transform:scaleX(1.1400);">29.09.2014 22:32:57</div>
<div class="t" style="left:34.68px;top:315.06px;font-size:16px;line-height:16px;font-weight:bold;color:#000;transform:scaleX(1.1431);">1</div>
<div class="t" style="left:51.57px;top:315.06px;font-size:16px;line-height:16px;font-weight:bold;color:#000;transform:scaleX(1.1504);">!Стандарт</div>
<div class="t" style="left:573.31px;top:315.06px;font-size:16px;line-height:16px;font-weight:bold;color:#000;transform:scaleX(1.1431);">0,000</div>
<div class="t" style="left:694.71px;top:315.06px;font-size:16px;line-height:16px;font-weight:bold;color:#000;transform:scaleX(1.1431);">0,000</div>
<div class="t" style="left:748.15px;top:315.06px;font-size:16px;line-height:16px;font-weight:bold;color:#000;transform:scaleX(1.1500);">11.08.2020 20:00:02</div>
<div class="t" style="left:1070.37px;top:315.06px;font-size:16px;line-height:16px;font-weight:bold;color:#000;transform:scaleX(1.0429);">GIFT</div>
<div class="t" style="left:34.23px;top:343.56px;font-size:16px;line-height:16px;font-weight:bold;color:#000;transform:scaleX(1.1431);">4</div>
<div class="t" style="left:52.14px;top:343.56px;font-size:16px;line-height:16px;font-weight:bold;color:#000;transform:scaleX(1.1587);">НДС 20%</div>
<div class="t" style="left:573.31px;top:343.56px;font-size:16px;line-height:16px;font-weight:bold;color:#000;transform:scaleX(1.1431);">0,000</div>
<div class="t" style="left:694.71px;top:343.56px;font-size:16px;line-height:16px;font-weight:bold;color:#000;transform:scaleX(1.1431);">0,000</div>
<div class="t" style="left:748.96px;top:343.56px;font-size:16px;line-height:16px;font-weight:bold;color:#000;transform:scaleX(1.1369);">30.10.2015 15:57:19</div>
<div class="t" style="left:1070.37px;top:343.56px;font-size:16px;line-height:16px;font-weight:bold;color:#000;transform:scaleX(1.0429);">GIFT</div>
<div class="t" style="left:34.68px;top:372.06px;font-size:16px;line-height:16px;font-weight:bold;color:#000;transform:scaleX(1.1431);">5</div>
<div class="t" style="left:52.17px;top:372.06px;font-size:16px;line-height:16px;font-weight:bold;color:#000;transform:scaleX(1.1329);">Рецептурный</div>
<div class="t" style="left:573.31px;top:372.06px;font-size:16px;line-height:16px;font-weight:bold;color:#000;transform:scaleX(1.1431);">0,000</div>
<div class="t" style="left:694.71px;top:372.06px;font-size:16px;line-height:16px;font-weight:bold;color:#000;transform:scaleX(1.1431);">0,000</div>
<div class="t" style="left:748.96px;top:372.06px;font-size:16px;line-height:16px;font-weight:bold;color:#000;transform:scaleX(1.1377);">30.10.2015 15:57:40</div>
<div class="t" style="left:1070.37px;top:372.06px;font-size:16px;line-height:16px;font-weight:bold;color:#000;transform:scaleX(1.0429);">GIFT</div>
<div class="t" style="left:35.03px;top:400.56px;font-size:16px;line-height:16px;font-weight:bold;color:#fff;transform:scaleX(1.1431);">7</div>
<div class="t" style="left:52.98px;top:400.56px;font-size:16px;line-height:16px;font-weight:bold;color:#fff;transform:scaleX(1.0831);">Акции</div>
<div class="t" style="left:563.14px;top:400.56px;font-size:16px;line-height:16px;font-weight:bold;color:#fff;transform:scaleX(1.1431);">15,000</div>
<div class="t" style="left:684.54px;top:400.56px;font-size:16px;line-height:16px;font-weight:bold;color:#fff;transform:scaleX(1.1431);">15,000</div>
<div class="t" style="left:748.16px;top:400.56px;font-size:16px;line-height:16px;font-weight:bold;color:#fff;transform:scaleX(1.1423);">15.02.2016 17:51:19</div>
<div class="t" style="left:1301.02px;top:400.56px;font-size:16px;line-height:16px;font-weight:bold;color:#fff;transform:scaleX(1.1363);">Скидка 1...</div>
<div class="t" style="left:34.68px;top:429.06px;font-size:16px;line-height:16px;font-weight:bold;color:#000;transform:scaleX(1.1431);">8</div>
<div class="t" style="left:52.24px;top:429.06px;font-size:16px;line-height:16px;font-weight:bold;color:#000;transform:scaleX(1.0623);">Инсулины</div>
<div class="t" style="left:563.14px;top:429.06px;font-size:16px;line-height:16px;font-weight:bold;color:#000;transform:scaleX(1.1431);">10,000</div>
<div class="t" style="left:694.71px;top:429.06px;font-size:16px;line-height:16px;font-weight:bold;color:#000;transform:scaleX(1.1431);">0,000</div>
<div class="t" style="left:748.62px;top:429.06px;font-size:16px;line-height:16px;font-weight:bold;color:#000;transform:scaleX(1.1392);">07.05.2020 12:34:39</div>
<div class="t" style="left:34.80px;top:457.56px;font-size:16px;line-height:16px;font-weight:bold;color:#000;transform:scaleX(1.1431);">9</div>
<div class="t" style="left:52.18px;top:457.56px;font-size:16px;line-height:16px;font-weight:bold;color:#000;transform:scaleX(1.1155);">Гос.регулирование 15%</div>
<div class="t" style="left:563.14px;top:457.56px;font-size:16px;line-height:16px;font-weight:bold;color:#000;transform:scaleX(1.1431);">15,000</div>
<div class="t" style="left:694.71px;top:457.56px;font-size:16px;line-height:16px;font-weight:bold;color:#000;transform:scaleX(1.1431);">0,000</div>
<div class="t" style="left:748.15px;top:457.56px;font-size:16px;line-height:16px;font-weight:bold;color:#000;transform:scaleX(1.1484);">11.08.2020 14:35:18</div>
<div class="t" style="left:24.74px;top:486.06px;font-size:16px;line-height:16px;font-weight:bold;color:#000;transform:scaleX(1.1431);">10</div>
<div class="t" style="left:52.19px;top:486.06px;font-size:16px;line-height:16px;font-weight:bold;color:#000;transform:scaleX(1.1121);">Гос.регулирование (Нац. перечень)</div>
<div class="t" style="left:573.31px;top:486.06px;font-size:16px;line-height:16px;font-weight:bold;color:#000;transform:scaleX(1.1431);">0,000</div>
<div class="t" style="left:694.71px;top:486.06px;font-size:16px;line-height:16px;font-weight:bold;color:#000;transform:scaleX(1.1431);">0,000</div>
<div class="t" style="left:748.15px;top:486.06px;font-size:16px;line-height:16px;font-weight:bold;color:#000;transform:scaleX(1.1484);">11.08.2020 14:35:55</div>
<div class="t" style="left:25.52px;top:514.56px;font-size:16px;line-height:16px;font-weight:bold;color:#000;transform:scaleX(1.1431);">11</div>
<div class="t" style="left:52.20px;top:514.56px;font-size:16px;line-height:16px;font-weight:bold;color:#000;transform:scaleX(1.0997);">Биологически активные вещества</div>
<div class="t" style="left:573.31px;top:514.56px;font-size:16px;line-height:16px;font-weight:bold;color:#000;transform:scaleX(1.1431);">0,000</div>
<div class="t" style="left:694.71px;top:514.56px;font-size:16px;line-height:16px;font-weight:bold;color:#000;transform:scaleX(1.1431);">0,000</div>
<div class="t" style="left:748.15px;top:514.56px;font-size:16px;line-height:16px;font-weight:bold;color:#000;transform:scaleX(1.1453);">11.08.2020 15:58:54</div>
<div class="t" style="left:24.74px;top:543.06px;font-size:16px;line-height:16px;font-weight:bold;color:#000;transform:scaleX(1.1431);">12</div>
<div class="t" style="left:53.19px;top:543.06px;font-size:16px;line-height:16px;font-weight:bold;color:#000;transform:scaleX(1.0986);">Дезинфицирующие средства</div>
<div class="t" style="left:573.31px;top:543.06px;font-size:16px;line-height:16px;font-weight:bold;color:#000;transform:scaleX(1.1431);">0,000</div>
<div class="t" style="left:694.71px;top:543.06px;font-size:16px;line-height:16px;font-weight:bold;color:#000;transform:scaleX(1.1431);">0,000</div>
<div class="t" style="left:748.15px;top:543.06px;font-size:16px;line-height:16px;font-weight:bold;color:#000;transform:scaleX(1.1500);">11.08.2020 15:59:42</div>
<div class="t" style="left:24.63px;top:571.56px;font-size:16px;line-height:16px;font-weight:bold;color:#000;transform:scaleX(1.1431);">13</div>
<div class="t" style="left:53.19px;top:571.56px;font-size:16px;line-height:16px;font-weight:bold;color:#000;transform:scaleX(1.1385);">Детское питание</div>
<div class="t" style="left:573.31px;top:571.56px;font-size:16px;line-height:16px;font-weight:bold;color:#000;transform:scaleX(1.1431);">0,000</div>
<div class="t" style="left:694.71px;top:571.56px;font-size:16px;line-height:16px;font-weight:bold;color:#000;transform:scaleX(1.1431);">0,000</div>
<div class="t" style="left:748.15px;top:571.56px;font-size:16px;line-height:16px;font-weight:bold;color:#000;transform:scaleX(1.1492);">11.08.2020 15:59:59</div>
<div class="t" style="left:24.05px;top:600.06px;font-size:16px;line-height:16px;font-weight:bold;color:#000;transform:scaleX(1.1431);">14</div>
<div class="t" style="left:52.19px;top:600.06px;font-size:16px;line-height:16px;font-weight:bold;color:#000;transform:scaleX(1.1097);">Изделия медицинского назначения</div>
<div class="t" style="left:573.31px;top:600.06px;font-size:16px;line-height:16px;font-weight:bold;color:#000;transform:scaleX(1.1431);">0,000</div>
<div class="t" style="left:694.71px;top:600.06px;font-size:16px;line-height:16px;font-weight:bold;color:#000;transform:scaleX(1.1431);">0,000</div>
<div class="t" style="left:748.14px;top:600.06px;font-size:16px;line-height:16px;font-weight:bold;color:#000;transform:scaleX(1.1554);">11.08.2020 16:00:11</div>
<div class="t" style="left:24.51px;top:628.56px;font-size:16px;line-height:16px;font-weight:bold;color:#000;transform:scaleX(1.1431);">15</div>
<div class="t" style="left:52.20px;top:628.56px;font-size:16px;line-height:16px;font-weight:bold;color:#000;transform:scaleX(1.1040);">Косметика</div>
<div class="t" style="left:573.31px;top:628.56px;font-size:16px;line-height:16px;font-weight:bold;color:#000;transform:scaleX(1.1431);">0,000</div>
<div class="t" style="left:694.71px;top:628.56px;font-size:16px;line-height:16px;font-weight:bold;color:#000;transform:scaleX(1.1431);">0,000</div>
<div class="t" style="left:748.15px;top:628.56px;font-size:16px;line-height:16px;font-weight:bold;color:#000;transform:scaleX(1.1492);">11.08.2020 16:00:26</div>
<div class="t" style="left:24.63px;top:657.06px;font-size:16px;line-height:16px;font-weight:bold;color:#000;transform:scaleX(1.1431);">16</div>
<div class="t" style="left:53.30px;top:657.06px;font-size:16px;line-height:16px;font-weight:bold;color:#000;transform:scaleX(1.1313);">Лекарственные средства</div>
<div class="t" style="left:573.31px;top:657.06px;font-size:16px;line-height:16px;font-weight:bold;color:#000;transform:scaleX(1.1431);">0,000</div>
<div class="t" style="left:694.71px;top:657.06px;font-size:16px;line-height:16px;font-weight:bold;color:#000;transform:scaleX(1.1431);">0,000</div>
<div class="t" style="left:748.15px;top:657.06px;font-size:16px;line-height:16px;font-weight:bold;color:#000;transform:scaleX(1.1484);">11.08.2020 16:00:45</div>
<div class="t" style="left:24.85px;top:685.56px;font-size:16px;line-height:16px;font-weight:bold;color:#000;transform:scaleX(1.1431);">17</div>
<div class="t" style="left:52.17px;top:685.56px;font-size:16px;line-height:16px;font-weight:bold;color:#000;transform:scaleX(1.1252);">Индикативная группа</div>
<div class="t" style="left:573.31px;top:685.56px;font-size:16px;line-height:16px;font-weight:bold;color:#000;transform:scaleX(1.1431);">0,000</div>
<div class="t" style="left:694.71px;top:685.56px;font-size:16px;line-height:16px;font-weight:bold;color:#000;transform:scaleX(1.1431);">0,000</div>
<div class="t" style="left:748.15px;top:685.56px;font-size:16px;line-height:16px;font-weight:bold;color:#000;transform:scaleX(1.1508);">11.08.2020 17:14:37</div>
<div class="t" style="left:24.51px;top:714.06px;font-size:16px;line-height:16px;font-weight:bold;color:#000;transform:scaleX(1.1431);">18</div>
<div class="t" style="left:52.17px;top:714.06px;font-size:16px;line-height:16px;font-weight:bold;color:#000;transform:scaleX(1.1347);">Индикативная группа (дополнит...</div>
<div class="t" style="left:563.14px;top:714.06px;font-size:16px;line-height:16px;font-weight:bold;color:#000;transform:scaleX(1.1431);">45,000</div>
<div class="t" style="left:694.71px;top:714.06px;font-size:16px;line-height:16px;font-weight:bold;color:#000;transform:scaleX(1.1431);">0,000</div>
<div class="t" style="left:748.16px;top:714.06px;font-size:16px;line-height:16px;font-weight:bold;color:#000;transform:scaleX(1.1439);">10.12.2020 15:25:37</div>

<!-- red arrow -->
<svg style="left:0;top:0" width="2159" height="1384" viewBox="0 0 2159 1384">
  <path d="M177.00 195.30 L194.30 202.50 L189.30 204.45 L231.95 253.50 L427.34 475.85 L452.99 505.23 L477.79 534.03 L500.11 560.40 L499.89 560.60 L476.44 535.22 L450.89 507.09 L424.87 478.04 L228.05 256.95 L184.58 208.62 L181.80 213.80 Z" fill="#ff0000" stroke="#ff0000" stroke-width="1.2" stroke-linejoin="round"/>
<circle cx="192.6" cy="203.4" r="2.1" fill="#ff0000"/><circle cx="182.4" cy="212.4" r="2.1" fill="#ff0000"/>
</svg>
</body></html>
